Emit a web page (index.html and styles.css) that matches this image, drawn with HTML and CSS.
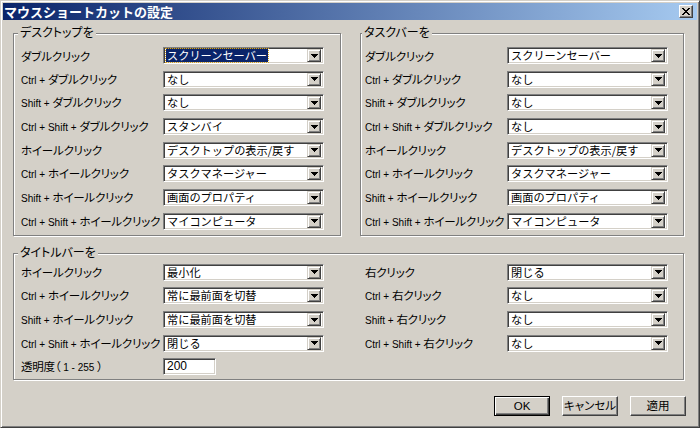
FILE: index.html
```html
<!DOCTYPE html>
<html lang="ja">
<head>
<meta charset="utf-8">
<title>マウスショートカットの設定</title>
<link rel="stylesheet" href="styles.css">
</head>
<body>
<div class="window">
  <div class="titlebar">
    <span class="title">マウスショートカットの設定</span>
    <span class="close"><svg width="8" height="7" viewBox="0 0 8 7" shape-rendering="crispEdges"><path d="M0 0h2v1h-2zM6 0h2v1h-2zM1 1h2v1h-2zM5 1h2v1h-2zM2 2h4v1h-4zM3 3h2v1h-2zM2 4h4v1h-4zM1 5h2v1h-2zM5 5h2v1h-2zM0 6h2v1h-2zM6 6h2v1h-2z" fill="#000"/></svg></span>
  </div>
  <div class="client">
    <div class="top">
      <div class="group g-desk">
        <div class="legend">デスクトップを</div>
        <div class="rows">
          <div class="label">ダブルクリック</div>
          <div class="combo"><span class="val"><span class="sel">スクリーンセーバー</span></span><span class="drop"><svg width="7" height="4" viewBox="0 0 7 4" shape-rendering="crispEdges"><path d="M0 0h7v1h-7zM1 1h5v1h-5zM2 2h3v1h-3zM3 3h1v1h-1z" fill="#000"/></svg></span></div>
          <div class="label"><span class="mod">Ctrl + </span>ダブルクリック</div>
          <div class="combo"><span class="val">なし</span><span class="drop"><svg width="7" height="4" viewBox="0 0 7 4" shape-rendering="crispEdges"><path d="M0 0h7v1h-7zM1 1h5v1h-5zM2 2h3v1h-3zM3 3h1v1h-1z" fill="#000"/></svg></span></div>
          <div class="label"><span class="mod">Shift + </span>ダブルクリック</div>
          <div class="combo"><span class="val">なし</span><span class="drop"><svg width="7" height="4" viewBox="0 0 7 4" shape-rendering="crispEdges"><path d="M0 0h7v1h-7zM1 1h5v1h-5zM2 2h3v1h-3zM3 3h1v1h-1z" fill="#000"/></svg></span></div>
          <div class="label"><span class="mod">Ctrl + Shift + </span>ダブルクリック</div>
          <div class="combo"><span class="val">スタンバイ</span><span class="drop"><svg width="7" height="4" viewBox="0 0 7 4" shape-rendering="crispEdges"><path d="M0 0h7v1h-7zM1 1h5v1h-5zM2 2h3v1h-3zM3 3h1v1h-1z" fill="#000"/></svg></span></div>
          <div class="label">ホイールクリック</div>
          <div class="combo"><span class="val">デスクトップの表示/戻す</span><span class="drop"><svg width="7" height="4" viewBox="0 0 7 4" shape-rendering="crispEdges"><path d="M0 0h7v1h-7zM1 1h5v1h-5zM2 2h3v1h-3zM3 3h1v1h-1z" fill="#000"/></svg></span></div>
          <div class="label"><span class="mod">Ctrl + </span>ホイールクリック</div>
          <div class="combo"><span class="val">タスクマネージャー</span><span class="drop"><svg width="7" height="4" viewBox="0 0 7 4" shape-rendering="crispEdges"><path d="M0 0h7v1h-7zM1 1h5v1h-5zM2 2h3v1h-3zM3 3h1v1h-1z" fill="#000"/></svg></span></div>
          <div class="label"><span class="mod">Shift + </span>ホイールクリック</div>
          <div class="combo"><span class="val">画面のプロパティ</span><span class="drop"><svg width="7" height="4" viewBox="0 0 7 4" shape-rendering="crispEdges"><path d="M0 0h7v1h-7zM1 1h5v1h-5zM2 2h3v1h-3zM3 3h1v1h-1z" fill="#000"/></svg></span></div>
          <div class="label"><span class="mod">Ctrl + Shift + </span>ホイールクリック</div>
          <div class="combo"><span class="val">マイコンピュータ</span><span class="drop"><svg width="7" height="4" viewBox="0 0 7 4" shape-rendering="crispEdges"><path d="M0 0h7v1h-7zM1 1h5v1h-5zM2 2h3v1h-3zM3 3h1v1h-1z" fill="#000"/></svg></span></div>
        </div>
      </div>
      <div class="group g-task">
        <div class="legend">タスクバーを</div>
        <div class="rows">
          <div class="label">ダブルクリック</div>
          <div class="combo"><span class="val">スクリーンセーバー</span><span class="drop"><svg width="7" height="4" viewBox="0 0 7 4" shape-rendering="crispEdges"><path d="M0 0h7v1h-7zM1 1h5v1h-5zM2 2h3v1h-3zM3 3h1v1h-1z" fill="#000"/></svg></span></div>
          <div class="label"><span class="mod">Ctrl + </span>ダブルクリック</div>
          <div class="combo"><span class="val">なし</span><span class="drop"><svg width="7" height="4" viewBox="0 0 7 4" shape-rendering="crispEdges"><path d="M0 0h7v1h-7zM1 1h5v1h-5zM2 2h3v1h-3zM3 3h1v1h-1z" fill="#000"/></svg></span></div>
          <div class="label"><span class="mod">Shift + </span>ダブルクリック</div>
          <div class="combo"><span class="val">なし</span><span class="drop"><svg width="7" height="4" viewBox="0 0 7 4" shape-rendering="crispEdges"><path d="M0 0h7v1h-7zM1 1h5v1h-5zM2 2h3v1h-3zM3 3h1v1h-1z" fill="#000"/></svg></span></div>
          <div class="label"><span class="mod">Ctrl + Shift + </span>ダブルクリック</div>
          <div class="combo"><span class="val">なし</span><span class="drop"><svg width="7" height="4" viewBox="0 0 7 4" shape-rendering="crispEdges"><path d="M0 0h7v1h-7zM1 1h5v1h-5zM2 2h3v1h-3zM3 3h1v1h-1z" fill="#000"/></svg></span></div>
          <div class="label">ホイールクリック</div>
          <div class="combo"><span class="val">デスクトップの表示/戻す</span><span class="drop"><svg width="7" height="4" viewBox="0 0 7 4" shape-rendering="crispEdges"><path d="M0 0h7v1h-7zM1 1h5v1h-5zM2 2h3v1h-3zM3 3h1v1h-1z" fill="#000"/></svg></span></div>
          <div class="label"><span class="mod">Ctrl + </span>ホイールクリック</div>
          <div class="combo"><span class="val">タスクマネージャー</span><span class="drop"><svg width="7" height="4" viewBox="0 0 7 4" shape-rendering="crispEdges"><path d="M0 0h7v1h-7zM1 1h5v1h-5zM2 2h3v1h-3zM3 3h1v1h-1z" fill="#000"/></svg></span></div>
          <div class="label"><span class="mod">Shift + </span>ホイールクリック</div>
          <div class="combo"><span class="val">画面のプロパティ</span><span class="drop"><svg width="7" height="4" viewBox="0 0 7 4" shape-rendering="crispEdges"><path d="M0 0h7v1h-7zM1 1h5v1h-5zM2 2h3v1h-3zM3 3h1v1h-1z" fill="#000"/></svg></span></div>
          <div class="label"><span class="mod">Ctrl + Shift + </span>ホイールクリック</div>
          <div class="combo"><span class="val">マイコンピュータ</span><span class="drop"><svg width="7" height="4" viewBox="0 0 7 4" shape-rendering="crispEdges"><path d="M0 0h7v1h-7zM1 1h5v1h-5zM2 2h3v1h-3zM3 3h1v1h-1z" fill="#000"/></svg></span></div>
        </div>
      </div>
    </div>
    <div class="group g-title">
      <div class="legend">タイトルバーを</div>
      <div class="rows rows-title">
        <div class="label">ホイールクリック</div>
        <div class="combo"><span class="val">最小化</span><span class="drop"><svg width="7" height="4" viewBox="0 0 7 4" shape-rendering="crispEdges"><path d="M0 0h7v1h-7zM1 1h5v1h-5zM2 2h3v1h-3zM3 3h1v1h-1z" fill="#000"/></svg></span></div>
        <div class="spacer"></div>
        <div class="label">右クリック</div>
        <div class="combo"><span class="val">閉じる</span><span class="drop"><svg width="7" height="4" viewBox="0 0 7 4" shape-rendering="crispEdges"><path d="M0 0h7v1h-7zM1 1h5v1h-5zM2 2h3v1h-3zM3 3h1v1h-1z" fill="#000"/></svg></span></div>

        <div class="label"><span class="mod">Ctrl + </span>ホイールクリック</div>
        <div class="combo"><span class="val">常に最前面を切替</span><span class="drop"><svg width="7" height="4" viewBox="0 0 7 4" shape-rendering="crispEdges"><path d="M0 0h7v1h-7zM1 1h5v1h-5zM2 2h3v1h-3zM3 3h1v1h-1z" fill="#000"/></svg></span></div>
        <div class="spacer"></div>
        <div class="label"><span class="mod">Ctrl + </span>右クリック</div>
        <div class="combo"><span class="val">なし</span><span class="drop"><svg width="7" height="4" viewBox="0 0 7 4" shape-rendering="crispEdges"><path d="M0 0h7v1h-7zM1 1h5v1h-5zM2 2h3v1h-3zM3 3h1v1h-1z" fill="#000"/></svg></span></div>

        <div class="label"><span class="mod">Shift + </span>ホイールクリック</div>
        <div class="combo"><span class="val">常に最前面を切替</span><span class="drop"><svg width="7" height="4" viewBox="0 0 7 4" shape-rendering="crispEdges"><path d="M0 0h7v1h-7zM1 1h5v1h-5zM2 2h3v1h-3zM3 3h1v1h-1z" fill="#000"/></svg></span></div>
        <div class="spacer"></div>
        <div class="label"><span class="mod">Shift + </span>右クリック</div>
        <div class="combo"><span class="val">なし</span><span class="drop"><svg width="7" height="4" viewBox="0 0 7 4" shape-rendering="crispEdges"><path d="M0 0h7v1h-7zM1 1h5v1h-5zM2 2h3v1h-3zM3 3h1v1h-1z" fill="#000"/></svg></span></div>

        <div class="label"><span class="mod">Ctrl + Shift + </span>ホイールクリック</div>
        <div class="combo"><span class="val">閉じる</span><span class="drop"><svg width="7" height="4" viewBox="0 0 7 4" shape-rendering="crispEdges"><path d="M0 0h7v1h-7zM1 1h5v1h-5zM2 2h3v1h-3zM3 3h1v1h-1z" fill="#000"/></svg></span></div>
        <div class="spacer"></div>
        <div class="label"><span class="mod">Ctrl + Shift + </span>右クリック</div>
        <div class="combo"><span class="val">なし</span><span class="drop"><svg width="7" height="4" viewBox="0 0 7 4" shape-rendering="crispEdges"><path d="M0 0h7v1h-7zM1 1h5v1h-5zM2 2h3v1h-3zM3 3h1v1h-1z" fill="#000"/></svg></span></div>

        <div class="label">透明度（<span class="mod"> 1 - 255 </span>）</div>
        <div class="field"><span class="val">200</span></div>
      </div>
    </div>
    <div class="buttons">
      <div class="btn btn-default">OK</div>
      <div class="btn">キャンセル</div>
      <div class="btn">適用</div>
    </div>
  </div>
</div>
</body>
</html>
```
FILE: styles.css
```css
* { box-sizing: border-box; }
html, body { margin: 0; padding: 0; }
body {
  background: #d4d0c8;
  font-family: "Liberation Sans", "Noto Sans CJK JP", sans-serif;
  color: #000;
}
.window {
  width: 700px;
  height: 428px;
  background: #d4d0c8;
  border: 1px solid;
  border-color: #d4d0c8 #404040 #404040 #d4d0c8;
  box-shadow: inset 1px 1px 0 #fff, inset -1px -1px 0 #808080;
  padding: 2px;
  display: flex;
  flex-direction: column;
}
.titlebar {
  height: 17px;
  background: linear-gradient(to right, #0a246a, #a6caf0);
  display: flex;
  align-items: center;
  justify-content: space-between;
  padding: 0 4px 0 1px;
}
.title {
  color: #fff;
  font-family: "Noto Sans CJK JP", sans-serif;
  font-weight: bold;
  font-size: 13px;
  line-height: 17px;
}
.close {
  width: 14px;
  height: 13px;
  background: #d4d0c8;
  border: 1px solid;
  border-color: #fff #404040 #404040 #fff;
  box-shadow: inset -1px -1px 0 #808080;
  display: flex;
  align-items: center;
  justify-content: center;
}
.close svg { display: block; }
.client {
  padding: 13px 11px 0 10px;
  display: flex;
  flex-direction: column;
}
.top {
  display: flex;
  gap: 19px;
}
.group {
  border: 1px solid #808080;
  box-shadow: inset 1px 1px 0 #fff, 1px 1px 0 #fff;
  display: flex;
  flex-direction: column;
}
.g-desk { width: 328px; padding: 0 16px 5px 7px; }
.g-task { width: 324px; padding: 0 15px 5px 4px; }
.g-title { width: 671px; margin-top: 17px; padding: 0 15px 4px 7px; }
.legend {
  width: fit-content;
  margin: -8px 0 0 -3px;
  padding: 0 2px;
  background: #d4d0c8;
  font-size: 12px;
  line-height: 14px;
  height: 14px;
  font-feature-settings: "palt";
  white-space: nowrap;
}
.rows {
  display: grid;
  grid-template-columns: 142px 161px;
  grid-auto-rows: 17px;
  row-gap: 6.7px;
  margin-top: 7px;
  align-items: center;
}
.rows-title {
  grid-template-columns: 142px 161px 41px 142px 161px;
  row-gap: 6.6px;
  margin-top: 4px;
}
.label {
  font-size: 11.5px;
  line-height: 14px;
  padding-top: 2px;
  white-space: nowrap;
  letter-spacing: -0.2px;
  font-feature-settings: "palt";
}
.mod {
  font-family: "Liberation Sans", sans-serif;
  font-size: 10px;
  letter-spacing: 0;
  white-space: pre;
}
.combo, .field {
  height: 17px;
  background: #fff;
  border: 1px solid;
  border-color: #808080 #fff #fff #808080;
  box-shadow: inset 1px 1px 0 #404040, inset -1px -1px 0 #d4d0c8;
  display: flex;
  align-items: center;
  padding: 2px;
}
.field { width: 53px; }
.val {
  flex: 1;
  font-family: "Noto Sans CJK JP", sans-serif;
  font-size: 11.2px;
  line-height: 13px;
  white-space: nowrap;
  padding-left: 1px;
}
.field .val {
  font-family: "Liberation Sans", sans-serif;
  font-size: 12px;
}
.sel {
  display: inline-block;
  background: #0a246a;
  color: #fff;
  padding: 0 1px;
  margin-left: -1px;
  line-height: 13px;
  outline: 1px dotted #d4a020;
}
.drop {
  width: 14px;
  height: 13px;
  flex: none;
  background: #d4d0c8;
  border: 1px solid;
  border-color: #d4d0c8 #404040 #404040 #d4d0c8;
  box-shadow: inset 1px 1px 0 #fff, inset -1px -1px 0 #808080;
  display: flex;
  align-items: center;
  justify-content: center;
}
.drop svg { display: block; }
.buttons {
  display: flex;
  justify-content: flex-end;
  gap: 12px;
  margin-top: 16px;
}
.btn {
  width: 56px;
  height: 20px;
  background: #d4d0c8;
  border: 1px solid;
  border-color: #fff #404040 #404040 #fff;
  box-shadow: inset -1px -1px 0 #808080;
  display: flex;
  align-items: center;
  justify-content: center;
  font-size: 11.5px;
  line-height: 14px;
  white-space: nowrap;
  font-feature-settings: "palt";
}
.btn-default {
  border: 1px solid #000;
  box-shadow: inset 1px 1px 0 #fff, inset -1px -1px 0 #404040, inset -2px -2px 0 #808080;
}
```
